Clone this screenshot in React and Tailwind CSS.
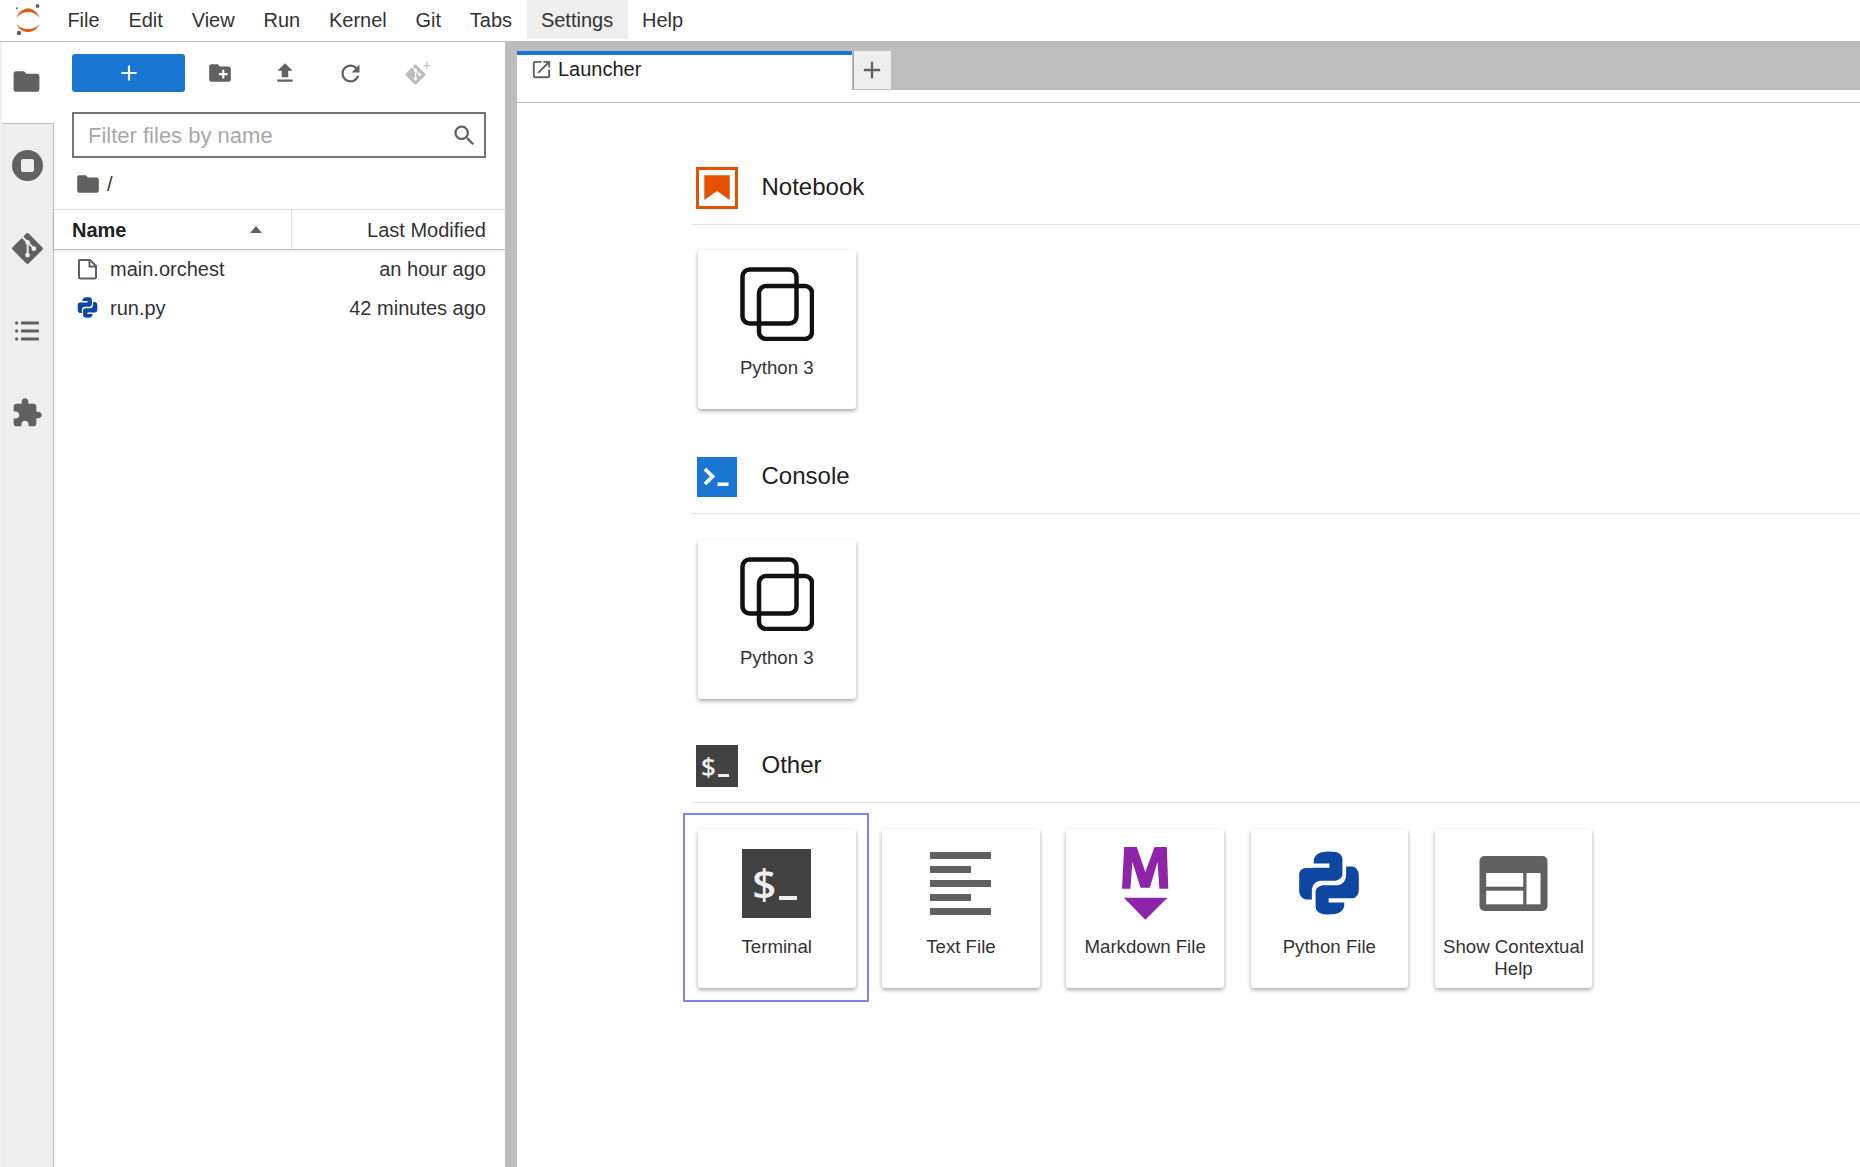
import { FaGitAlt } from "react-icons/fa";

const menus = ["File", "Edit", "View", "Run", "Kernel", "Git", "Tabs", "Settings", "Help"];

const folder = "M10 4H4c-1.1 0-1.99.9-1.99 2L2 18c0 1.1.9 2 2 2h16c1.1 0 2-.9 2-2V8c0-1.1-.9-2-2-2h-8l-2-2z";
const newFolder = "M20 6h-8l-2-2H4c-1.1 0-1.99.9-1.99 2L2 18c0 1.1.9 2 2 2h16c1.1 0 2-.9 2-2V8c0-1.1-.9-2-2-2zm-1 8h-3v3h-2v-3h-3v-2h3V9h2v3h3v2z";
const upload = "M9 16h6v-6h4l-7-7-7 7h4zm-4 2h14v2H5z";
const refresh = "M17.65 6.35C16.2 4.9 14.21 4 12 4c-4.42 0-7.99 3.58-7.99 8s3.57 8 7.99 8c3.73 0 6.84-2.55 7.73-6h-2.08c-.82 2.33-3.04 4-5.65 4-3.31 0-6-2.69-6-6s2.69-6 6-6c1.66 0 3.14.69 4.22 1.78L13 11h7V4l-2.35 2.35z";
const plus = "M19 13h-6v6h-2v-6H5v-2h6V5h2v6h6v2z";
const search = "M15.5 14h-.79l-.28-.27C15.41 12.59 16 11.11 16 9.5 16 5.91 13.09 3 9.5 3S3 5.91 3 9.5 5.91 16 9.5 16c1.61 0 3.09-.59 4.23-1.57l.27.28v.79l5 4.99L20.49 19l-4.99-5zm-6 0C7.01 14 5 11.99 5 9.5S7.01 5 9.5 5 14 7.01 14 9.5 11.99 14 9.5 14z";
const puzzle = "M20.5 11H19V7c0-1.1-.9-2-2-2h-4V3.5C13 2.12 11.88 1 10.5 1S8 2.12 8 3.5V5H4c-1.1 0-1.99.9-1.99 2v3.8H3.5c1.49 0 2.7 1.21 2.7 2.7s-1.21 2.7-2.7 2.7H2V20c0 1.1.9 2 2 2h3.8v-1.5c0-1.49 1.21-2.7 2.7-2.7 1.49 0 2.7 1.21 2.7 2.7V22H17c1.1 0 2-.9 2-2v-4h1.5c1.38 0 2.5-1.12 2.5-2.5S21.88 11 20.5 11z";
const openNew = "M19 19H5V5h7V3H5c-1.11 0-2 .9-2 2v14c0 1.1.89 2 2 2h14c1.1 0 2-.9 2-2v-7h-2v7zM14 3v2h3.59l-9.83 9.83 1.41 1.41L19 6.41V10h2V3h-7z";

function Mat({ d, size = 24, fill = "#616161" }) {
  return (
    <svg width={size} height={size} viewBox="0 0 24 24" fill={fill} className="shrink-0">
      <path d={d} />
    </svg>
  );
}

function JupyterLogo() {
  return (
    <svg width="30" height="34" viewBox="0 0 30 34" className="shrink-0">
      <path d="M3.5 16.5C6 10 11 7.5 15 7.5s9 2.5 11.5 9C23 12.5 19 11 15 11s-8 1.5-11.5 5.5z" fill="#e8590c" />
      <path d="M3.5 23C7 27 11 28 15 28s8-1 11.5-5C24 29 19 31 15 31S6 29 3.5 23z" fill="#e8590c" />
      <circle cx="24.5" cy="5" r="1.9" fill="#616161" />
      <circle cx="3.8" cy="7.2" r="1" fill="#616161" />
      <circle cx="6" cy="32" r="2.2" fill="#616161" />
    </svg>
  );
}

function ListIcon() {
  return (
    <svg width="24" height="22" viewBox="0 0 24 22" fill="#616161">
      <circle cx="1.7" cy="3" r="1.7" />
      <circle cx="1.7" cy="11" r="1.7" />
      <circle cx="1.7" cy="19" r="1.7" />
      <rect x="6" y="1.5" width="18" height="3" />
      <rect x="6" y="9.5" width="18" height="3" />
      <rect x="6" y="17.5" width="18" height="3" />
    </svg>
  );
}

function FileIcon() {
  return (
    <svg width="22" height="22" viewBox="0 0 22 22" fill="none" stroke="#616161" strokeWidth="2">
      <path d="M2.5 2h10.5l6 6v11a1.5 1.5 0 0 1-1.5 1.5H3.5A1.5 1.5 0 0 1 2 19V2.5z" />
      <path d="M12.5 2v6.5H19" />
    </svg>
  );
}

function PythonIcon({ size = 22 }) {
  return (
    <svg width={size} height={size} viewBox="0 0 22 22" fill="#0d47a1" className="shrink-0">
      <path d="M11.1 6.9V5.8H6.9c0-.5 0-1.3.2-1.6.4-.7.8-1.1 1.7-1.4 1.7-.3 2.5-.3 3.9-.1 1 .1 1.9.9 1.9 1.9v4.2c0 .5-.9 1.6-2 1.6H8.8c-1.5 0-2.4 1.4-2.4 2.8v2.2H4.7C3.5 15.1 3 14 3 13.1V9c-.1-1 .6-2 1.8-2 1.5-.1 6.3-.1 6.3-.1z" />
      <path d="M10.9 15.1v1.1h4.2c0 .5 0 1.3-.2 1.6-.4.7-.8 1.1-1.7 1.4-1.7.3-2.5.3-3.9.1-1-.1-1.9-.9-1.9-1.9v-4.2c0-.5.9-1.6 2-1.6h3.8c1.5 0 2.4-1.4 2.4-2.8V6.6h1.7C18.5 6.9 19 8 19 8.9V13c0 1-.7 2.1-1.9 2.1h-6.2z" />
    </svg>
  );
}

function KernelIcon() {
  return (
    <svg width="74" height="74" viewBox="0 0 74 74" fill="none" stroke="#111" strokeWidth="4.5">
      <rect x="2.5" y="2.5" width="54" height="54" rx="7" />
      <rect x="19" y="19" width="53" height="53" rx="7" />
    </svg>
  );
}

function NotebookIcon() {
  return (
    <svg width="42" height="42" viewBox="0 0 42 42" className="shrink-0">
      <rect x="1.5" y="1.5" width="39" height="39" fill="none" stroke="#e65100" strokeWidth="3" />
      <path d="M8.3 8.3h25.4V33L21 24 8.3 33z" fill="#e65100" />
    </svg>
  );
}

function ConsoleIcon() {
  return (
    <svg width="42" height="42" viewBox="0 0 42 42" className="shrink-0">
      <rect width="40" height="40" x="1" y="1" fill="#1976d2" />
      <path d="M9 13l7.5 7.5L9 28" fill="none" stroke="#fff" strokeWidth="3.8" />
      <rect x="21.5" y="26.5" width="11" height="3.5" fill="#fff" />
    </svg>
  );
}

function TerminalIcon({ big }) {
  return (
    <div
      className={
        big
          ? "flex h-[69px] w-[69px] shrink-0 items-center gap-[3px] bg-[#424242] pl-[10px] text-[#eeeeee]"
          : "flex h-[42px] w-[42px] shrink-0 items-center gap-[2px] bg-[#424242] pl-[5px] text-[#eeeeee]"
      }
    >
      <span
        className={
          big
            ? "font-['Open_Sans',sans-serif] text-[42px] leading-none font-semibold"
            : "font-['Open_Sans',sans-serif] text-[26px] leading-none font-semibold"
        }
      >
        $
      </span>
      <span className={big ? "mt-[30px] h-[4px] w-[18px] bg-[#eeeeee]" : "mt-[18px] h-[3px] w-[11px] bg-[#eeeeee]"} />
    </div>
  );
}

function TextFileIcon() {
  return (
    <div className="flex w-[61px] flex-col gap-[7px]">
      <div className="h-[7px] w-[61px] bg-[#616161]" />
      <div className="h-[7px] w-[41px] bg-[#616161]" />
      <div className="h-[7px] w-[61px] bg-[#616161]" />
      <div className="h-[7px] w-[41px] bg-[#616161]" />
      <div className="h-[7px] w-[61px] bg-[#616161]" />
    </div>
  );
}

function MarkdownIcon() {
  return (
    <svg width="47" height="73" viewBox="0 0 47 73" fill="#8e24aa">
      <path d="M2.2 0h12.6l8.5 25 9.3-25h12.2l1.5 41.7h-8.9l-1.9-26.7-7.7 25.7h-9.3l-8.1-25.7-2 26.7H0z" />
      <path d="M1.9 50.7h43.6L23.3 72.7z" />
    </svg>
  );
}

function HelpIcon() {
  return (
    <svg width="69" height="55" viewBox="0 0 68 55">
      <rect width="68" height="55" rx="5" fill="#616161" />
      <rect x="6.7" y="17" width="37" height="13.7" fill="#fff" />
      <rect x="6.7" y="34.7" width="37" height="13.6" fill="#fff" />
      <rect x="47" y="17" width="14" height="31.3" fill="#fff" />
    </svg>
  );
}

function Card({ icon, label, focused }) {
  return (
    <div
      className={
        focused
          ? "mt-[-3px] mb-[-1px] ml-[-2px] shrink-0 pt-[3px] pb-[1px] pl-[2px] outline-2 outline-offset-[11px] outline-[#7f7fff]"
          : "shrink-0"
      }
    >
      <div className="flex h-[159px] w-[157.5px] flex-col items-center rounded-[3px] bg-white shadow-[0_2px_4px_rgba(0,0,0,0.35)]">
        <div className="flex h-[107px] w-full items-center justify-center pt-px">{icon}</div>
        <div className="w-full px-1 text-center text-[18.67px] leading-[21.5px] text-[#333333]">{label}</div>
      </div>
    </div>
  );
}

function Section({ icon, title, children, gap, inner }) {
  return (
    <div className={gap}>
      <div className="ml-[-4px] flex h-[58px] items-start border-b border-[#e0e0e0] pl-[4px]">
        {icon}
        <span className="ml-[23.5px] text-[24px] leading-[40px] text-[#212121]">{title}</span>
      </div>
      <div className={inner}>{children}</div>
    </div>
  );
}

function FileRow({ icon, name, modified }) {
  return (
    <div className="flex h-[39px] items-center pr-[19px] pb-[2px] pl-[21px] text-[20px] text-[#333333]">
      <div className="flex w-[25px] justify-center">{icon}</div>
      <span className="ml-[10px] flex-1">{name}</span>
      <span>{modified}</span>
    </div>
  );
}

export default function App() {
  return (
    <div className="flex h-screen w-full flex-col overflow-hidden bg-white font-['Liberation_Sans',Arial,sans-serif] text-[#212121]">
      {/* menu bar */}
      <div className="flex h-[42px] shrink-0 border-b border-[#bdbdbd]">
        <div className="flex w-[53px] shrink-0 items-start justify-center pt-[1px] pl-[2px]">
          <JupyterLogo />
        </div>
        {menus.map((m) => (
          <div
            key={m}
            className={
              m === "Settings"
                ? "h-[39px] bg-[#eeeeee] px-[14.4px] text-[20px] leading-[40px] text-[#333333]"
                : "h-[39px] px-[14.4px] text-[20px] leading-[40px] text-[#333333]"
            }
          >
            {m}
          </div>
        ))}
      </div>

      <div className="flex min-h-0 flex-1">
        {/* activity bar */}
        <div className="flex w-[54px] shrink-0 flex-col border-l-2 border-[#eef0f4]">
          <div className="flex h-[81px] items-center justify-center pr-[3px] pb-[3px]">
            <Mat d={folder} size={31} />
          </div>
          <div className="flex flex-1 flex-col items-center border-t border-r border-[#bdbdbd] bg-[#eeeeee] pr-[1px]">
            <div className="mt-[26px] flex h-[31px] w-[31px] items-center justify-center rounded-full bg-[#616161]">
              <div className="h-[13px] w-[13px] rounded-[2px] bg-[#eeeeee]" />
            </div>
            <div className="mt-[50px]">
              <FaGitAlt size={35} color="#616161" />
            </div>
            <div className="mt-[54px]">
              <ListIcon />
            </div>
            <div className="mt-[55px]">
              <Mat d={puzzle} size={32} />
            </div>
          </div>
        </div>

        {/* file browser */}
        <div className="flex w-[451px] shrink-0 flex-col">
          <div className="mt-[12px] flex h-[38px] items-center pl-[18px]">
            <div className="flex h-[38px] w-[113px] items-center justify-center rounded-[3px] bg-[#1976d2]">
              <Mat d={plus} size={26} fill="#fff" />
            </div>
            <div className="ml-[21px] flex w-[28px] justify-center">
              <Mat d={newFolder} size={26} />
            </div>
            <div className="ml-[37px] flex w-[28px] justify-center">
              <Mat d={upload} size={26} />
            </div>
            <div className="ml-[37px] flex w-[28px] justify-center">
              <Mat d={refresh} size={27} />
            </div>
            <div className="relative ml-[37px] flex w-[28px] justify-center pt-[2px]">
              <FaGitAlt size={23} color="#bdbdbd" />
              <span className="absolute top-[-3px] right-[-2px] text-[14px] leading-none text-[#bdbdbd]">+</span>
            </div>
          </div>

          <div className="mt-[20px] mr-[19px] ml-[18px] flex h-[46px] items-center justify-between border-2 border-[#757575] pt-[1px] pr-[6px] pl-[14px]">
            <span className="text-[22px] text-[#a8a8a8]">Filter files by name</span>
            <Mat d={search} size={27} />
          </div>

          <div className="mt-[14px] flex h-[24px] items-center pl-[21px]">
            <Mat d={folder} size={26} />
            <span className="ml-[6px] text-[20px] text-[#333333]">/</span>
          </div>

          <div className="mt-[13px] flex h-[41px] items-center border-y border-t-[#e0e0e0] border-b-[#bdbdbd] text-[20px] shadow-[0_1px_3px_rgba(0,0,0,0.12)]">
            <div className="flex h-full w-[237px] items-center justify-between pr-[29px] pl-[18px]">
              <span className="font-bold text-[#212121]">Name</span>
              <span className="h-0 w-0 border-x-[6.5px] border-b-[7px] border-x-transparent border-b-[#616161]" />
            </div>
            <div className="flex h-full flex-1 items-center justify-end border-l border-[#e0e0e0] pr-[19px] text-[#333333]">
              Last Modified
            </div>
          </div>

          <FileRow icon={<FileIcon />} name="main.orchest" modified="an hour ago" />
          <FileRow icon={<PythonIcon size={27} />} name="run.py" modified="42 minutes ago" />
        </div>

        {/* splitter + main area */}
        <div className="flex min-w-0 flex-1 flex-col bg-white">
          <div className="flex h-[48px] shrink-0 items-end border-l-[12px] border-[#bdbdbd] bg-[#bdbdbd] pt-[9px]">
            <div className="flex h-[39px] w-[335px] border-t-4 border-[#1976d2] bg-white pl-[13px]">
              <div className="flex h-[28px] items-center">
                <Mat d={openNew} size={23} />
                <span className="ml-[5px] text-[20px] leading-none text-[#212121]">Launcher</span>
              </div>
            </div>
            <div className="mb-px ml-px flex h-[38px] w-[38px] items-center justify-center border-l border-[#9e9e9e] bg-[#eeeeee] pr-[2px]">
              <Mat d={plus} size={28} />
            </div>
          </div>

          <div className="flex min-h-0 flex-1 border-l-[12px] border-[#bdbdbd]">
            <div className="min-w-0 flex-1">
              <div className="h-[13px] border-b border-[#bdbdbd]" />
              <div className="ml-[179px] pt-[64px]">
                <Section icon={<NotebookIcon />} title="Notebook" inner="mt-[25px] ml-[2px] flex gap-[26.7px]">
                  <Card icon={<KernelIcon />} label="Python 3" />
                </Section>
                <Section gap="mt-[47px]" icon={<ConsoleIcon />} title="Console" inner="mt-[26px] ml-[2px] flex gap-[26.7px]">
                  <Card icon={<KernelIcon />} label="Python 3" />
                </Section>
                <Section gap="mt-[46px]" icon={<TerminalIcon />} title="Other" inner="mt-[26px] ml-[2px] flex gap-[26.7px]">
                  <Card focused icon={<TerminalIcon big />} label="Terminal" />
                  <Card icon={<TextFileIcon />} label="Text File" />
                  <Card icon={<MarkdownIcon />} label="Markdown File" />
                  <Card icon={<PythonIcon size={82} />} label="Python File" />
                  <Card icon={<HelpIcon />} label="Show Contextual Help" />
                </Section>
              </div>
            </div>
          </div>
        </div>
      </div>
    </div>
  );
}
